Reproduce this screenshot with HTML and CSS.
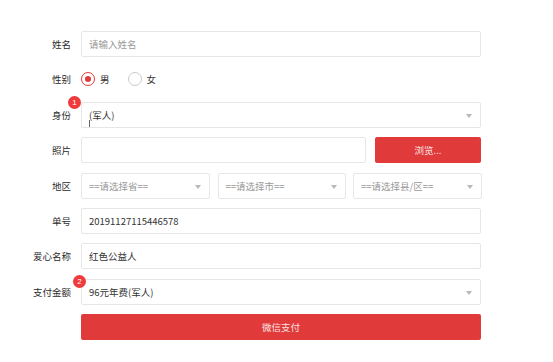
FILE: index.html
```html
<!DOCTYPE html>
<html lang="zh-CN">
<head>
<meta charset="utf-8">
<title>表单</title>
<link rel="stylesheet" href="styles.css">
</head>
<body>
<form class="form">
  <div class="row">
    <label class="label">姓名</label>
    <div class="field"><span class="placeholder">请输入姓名</span></div>
  </div>
  <div class="row">
    <label class="label">性别</label>
    <div class="radios">
      <span class="radio checked"></span><span class="radio-text">男</span>
      <span class="radio"></span><span class="radio-text">女</span>
    </div>
  </div>
  <div class="row">
    <label class="label">身份<span class="badge badge-1">1</span></label>
    <div class="field select"><span class="value">(军人)</span><span class="caret-line"></span><span class="arrow"></span></div>
  </div>
  <div class="row">
    <label class="label">照片</label>
    <div class="photo">
      <div class="field"></div>
      <div class="btn">浏览...</div>
    </div>
  </div>
  <div class="row">
    <label class="label">地区</label>
    <div class="region">
      <div class="field select"><span class="placeholder">==请选择省==</span><span class="arrow"></span></div>
      <div class="field select"><span class="placeholder">==请选择市==</span><span class="arrow"></span></div>
      <div class="field select"><span class="placeholder">==请选择县/区==</span><span class="arrow"></span></div>
    </div>
  </div>
  <div class="row">
    <label class="label">单号</label>
    <div class="field"><span class="value">20191127115446578</span></div>
  </div>
  <div class="row">
    <label class="label">爱心名称</label>
    <div class="field"><span class="value">红色公益人</span></div>
  </div>
  <div class="row">
    <label class="label">支付金额<span class="badge badge-2">2</span></label>
    <div class="field select"><span class="value">96元年费(军人)</span><span class="arrow"></span></div>
  </div>
  <div class="row">
    <span class="label"></span>
    <div class="btn btn-pay">微信支付</div>
  </div>
</form>
</body>
</html>
```

FILE: styles.css
```css
* { box-sizing: border-box; }
html, body { margin: 0; padding: 0; background: #fff; }
body {
  font-family: "Noto Sans CJK SC", "Noto Sans", sans-serif;
  font-size: 9.5px;
  color: #333;
  width: 553px;
  height: 362px;
  overflow: hidden;
}
.form {
  padding-top: 31px;
  display: flex;
  flex-direction: column;
  gap: 9.4px;
}
.row {
  display: grid;
  grid-template-columns: 71px 400px;
  column-gap: 10px;
  height: 26px;
  align-items: center;
}
.label {
  position: relative;
  z-index: 2;
  text-align: right;
  color: #2b2b2b;
  font-size: 9.5px;
}
.field {
  position: relative;
  height: 26px;
  border: 1px solid #e6e6e6;
  border-radius: 2px;
  background: #fff;
  display: flex;
  align-items: center;
  padding-left: 7px;
  white-space: nowrap;
  overflow: hidden;
}
.placeholder { color: #999; }
.value { color: #333; }
.arrow {
  position: absolute;
  right: 8px;
  top: 11px;
  width: 0;
  height: 0;
  border-left: 3.5px solid transparent;
  border-right: 3.5px solid transparent;
  border-top: 4px solid #b8b8b8;
}
.caret-line {
  position: absolute;
  left: 7px;
  top: 17px;
  width: 1px;
  height: 10px;
  background: #666;
}
.radios {
  display: flex;
  align-items: center;
}
.radio {
  width: 14px;
  height: 14px;
  border: 1px solid #c9c9c9;
  border-radius: 50%;
  display: flex;
  align-items: center;
  justify-content: center;
}
.radio.checked { border-color: #e03a3a; }
.radio.checked::after {
  content: "";
  width: 6px;
  height: 6px;
  border-radius: 50%;
  background: #e03a3a;
}
.radio-text {
  margin-left: 5px;
  margin-right: 18px;
  color: #333;
}
.badge {
  position: absolute;
  z-index: 3;
  width: 13px;
  height: 13px;
  border-radius: 50%;
  background: #f0393a;
  color: #fff;
  font-size: 8px;
  line-height: 13px;
  text-align: center;
  font-family: "Liberation Sans", sans-serif;
}
.badge-1 { right: -10px; top: -12px; }
.badge-2 { right: -15px; top: -10px; }
.photo {
  display: grid;
  grid-template-columns: 285px 106px;
  column-gap: 9px;
}
.btn {
  height: 26px;
  background: #e03a3a;
  border-radius: 2px;
  color: #fbe3e3;
  display: flex;
  align-items: center;
  justify-content: center;
}
.region {
  display: grid;
  grid-template-columns: 129px 128px 129px;
  column-gap: 7.5px;
}
.btn-pay { width: 400px; }
```
